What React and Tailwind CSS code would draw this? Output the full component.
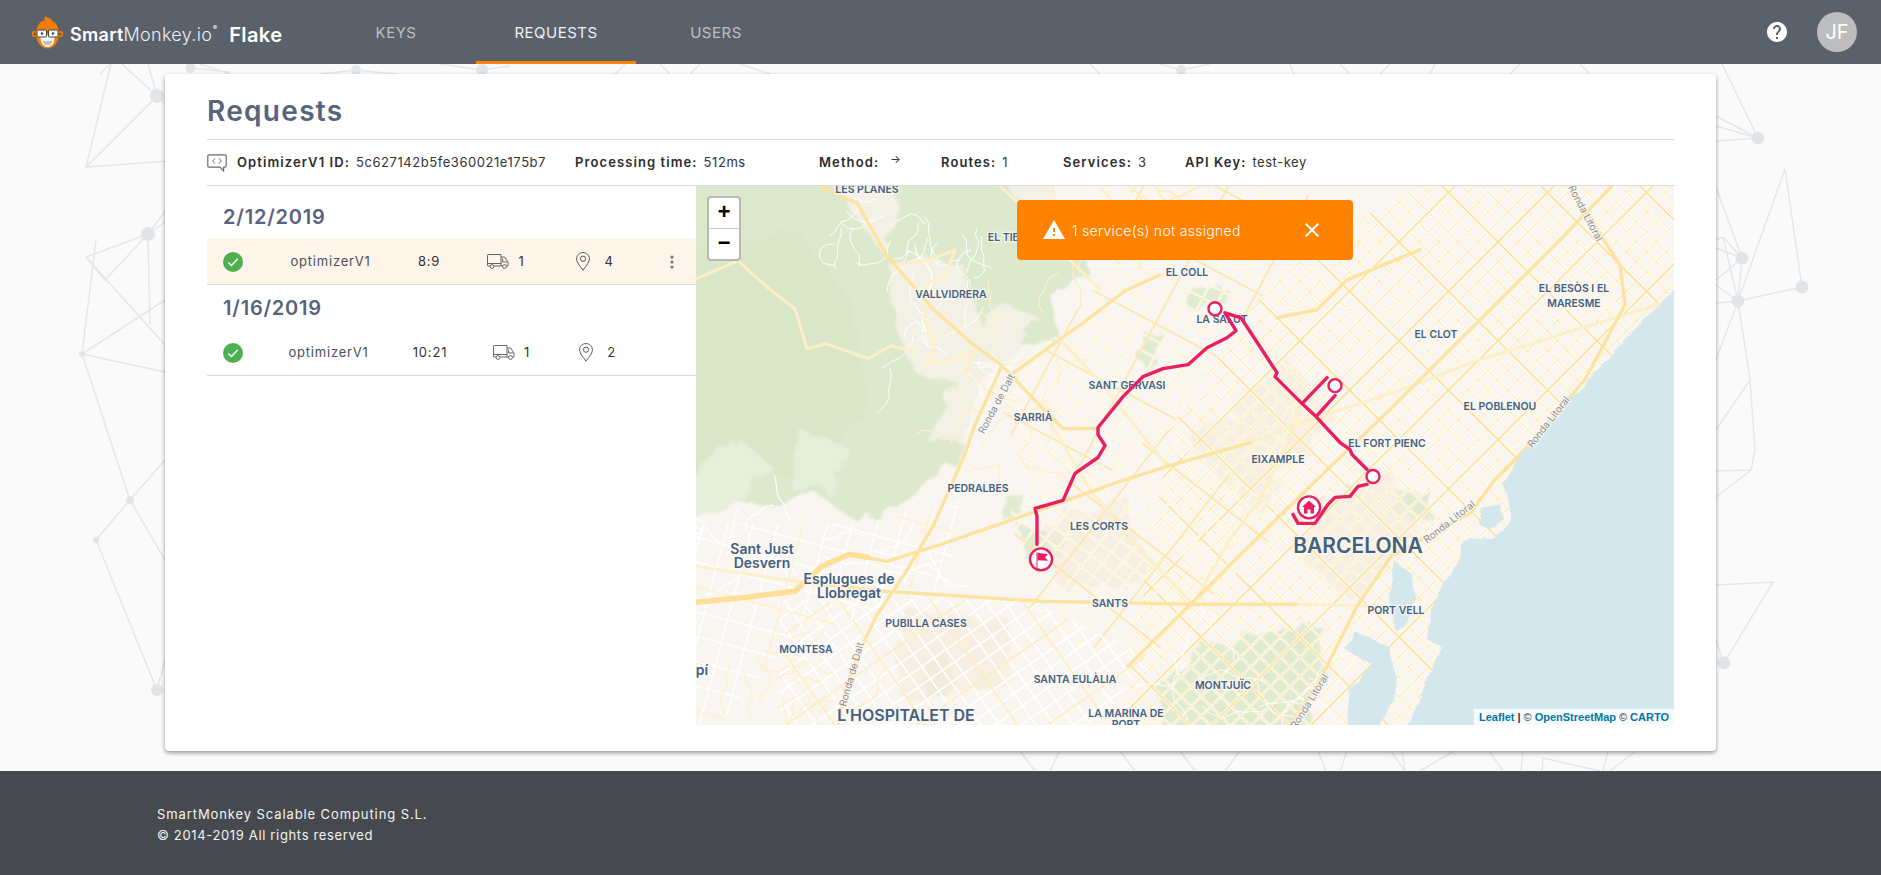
import { MdClose, MdHelp, MdWarning } from "react-icons/md";

// seeded so the streets stay put between renders
function rng(seed) {
  let s = seed;
  return () => {
    s = (s * 16807) % 2147483647;
    return s / 2147483647;
  };
}

function gridPaths(cx, cy, deg, step, n, len) {
  let minor = "";
  let major = "";
  const a = (deg * Math.PI) / 180;
  const dirs = [
    [Math.cos(a), Math.sin(a)],
    [-Math.sin(a), Math.cos(a)],
  ];
  dirs.forEach(([dx, dy], k) => {
    const [px, py] = dirs[1 - k];
    for (let i = -n; i <= n; i++) {
      const ox = cx + px * i * step;
      const oy = cy + py * i * step;
      const seg = `M${(ox - dx * len).toFixed(1)} ${(oy - dy * len).toFixed(1)}L${(ox + dx * len).toFixed(1)} ${(oy + dy * len).toFixed(1)}`;
      if (i % 5 === 0) major += seg;
      else minor += seg;
    }
  });
  return { minor, major };
}

function wiggles(seed, x, y, w, h, count, segs, stepLen) {
  const r = rng(seed);
  let d = "";
  for (let i = 0; i < count; i++) {
    let px = x + r() * w;
    let py = y + r() * h;
    let ang = r() * Math.PI * 2;
    d += `M${px.toFixed(1)} ${py.toFixed(1)}`;
    for (let j = 0; j < segs; j++) {
      ang += (r() - 0.5) * 1.5;
      px += Math.cos(ang) * stepLen;
      py += Math.sin(ang) * stepLen;
      d += `L${px.toFixed(1)} ${py.toFixed(1)}`;
    }
  }
  return d;
}

const eixample = gridPaths(1300, 440, 45, 14, 32, 520);
const upper = gridPaths(1120, 390, 28, 15, 16, 260);
const corts = gridPaths(1060, 570, 38, 15, 15, 240);
const hospitalet = gridPaths(880, 660, 55, 15, 16, 260);
const west = gridPaths(780, 610, 15, 24, 8, 180);

const labels = [
  { t: "LES PLANES", x: 867, y: 190, s: 10.5 },
  { t: "EL TIBIDABO", x: 1020, y: 238, s: 10.5 },
  { t: "VALLVIDRERA", x: 951, y: 295, s: 10.5 },
  { t: "EL COLL", x: 1187, y: 273, s: 10.5 },
  { t: "LA SALUT", x: 1222, y: 320, s: 10.5 },
  { t: "SANT GERVASI", x: 1127, y: 386, s: 10.5 },
  { t: "SARRIÀ", x: 1033, y: 418, s: 10.5 },
  { t: "EL FORT PIENC", x: 1387, y: 444, s: 10.5 },
  { t: "EIXAMPLE", x: 1278, y: 460, s: 10.5 },
  { t: "PEDRALBES", x: 978, y: 489, s: 10.5 },
  { t: "LES CORTS", x: 1099, y: 527, s: 10.5 },
  { t: "BARCELONA", x: 1358, y: 546, s: 21 },
  { t: "Sant Just", x: 762, y: 549, s: 14 },
  { t: "Desvern", x: 762, y: 563, s: 14 },
  { t: "Esplugues de", x: 849, y: 579, s: 14 },
  { t: "Llobregat", x: 849, y: 593, s: 14 },
  { t: "SANTS", x: 1110, y: 604, s: 10.5 },
  { t: "PUBILLA CASES", x: 926, y: 624, s: 10.5 },
  { t: "MONTESA", x: 806, y: 650, s: 10.5 },
  { t: "pí", x: 702, y: 670, s: 14 },
  { t: "SANTA EULÀLIA", x: 1075, y: 680, s: 10.5 },
  { t: "MONTJUÏC", x: 1223, y: 686, s: 10.5 },
  { t: "L'HOSPITALET DE", x: 906, y: 716, s: 16 },
  { t: "LA MARINA DE", x: 1126, y: 714, s: 10.5 },
  { t: "PORT", x: 1126, y: 726, s: 10.5 },
  { t: "PORT VELL", x: 1396, y: 611, s: 10.5 },
  { t: "EL BESÒS I EL", x: 1574, y: 289, s: 10.5 },
  { t: "MARESME", x: 1574, y: 304, s: 10.5 },
  { t: "EL CLOT", x: 1436, y: 335, s: 10.5 },
  { t: "EL POBLENOU", x: 1500, y: 407, s: 10.5 },
];

const roadLabels = [
  { x: 996, y: 404, r: -62, t: "Ronda de Dalt" },
  { x: 851, y: 675, r: -74, t: "Ronda de Dalt" },
  { x: 1449, y: 522, r: -38, t: "Ronda Litoral" },
  { x: 1309, y: 702, r: -58, t: "Ronda Litoral" },
  { x: 1548, y: 422, r: -52, t: "Ronda Litoral" },
  { x: 1586, y: 213, r: 62, t: "Ronda Litoral" },
];

const majorRoads = [
  "M818 186L857 203L887 256L933 309L971 343L1002 366L1040 406L1063 429L1098 429",
  "M1002 366L975 425L964 457L933 527L903 577L876 617L864 643L845 690L838 726",
  "M696 603L746 598L795 592L822 567L849 555L887 562L941 545L1033 513L1117 483L1167 467L1250 443",
  "M803 583L884 592L1040 602L1193 605L1296 605",
  "M1128 667L1283 513L1393 407L1500 300L1560 240L1612 186",
  "M1291 726L1322 677L1357 607L1391 557L1471 513L1495 480L1525 450L1585 380L1625 305L1620 265L1596 228L1570 186",
  "M1014 373L1079 326L1125 291L1160 275",
  "M1277 318L1317 310L1347 280L1420 250",
];

const paleRoads = [
  "M696 279L738 261L769 289L795 309L807 349L826 344L868 359L891 346L918 353",
  "M898 265L930 260L955 250L945 275L925 285L925 320L935 350L925 365L950 360L975 350L965 375",
  "M696 567L803 583",
  "M1250 443L1310 420L1393 393L1480 360L1560 335L1674 300",
  "M1193 605L1230 540L1260 500L1290 440L1300 400",
  "M1167 467L1130 420L1098 380L1060 340",
  "M1296 605L1400 607L1420 600",
  "M1040 406L1090 490L1130 540L1193 605",
  "M1000 186L1030 215L1060 250L1100 290",
];

const netLines = [
  "M111 64L86 167L157 96L122 64M157 96L148 64M86 167L170 161M157 96L170 108",
  "M148 234L86 257L105 280L148 234L150 325M86 257L165 345M148 234L170 205M148 234L170 218",
  "M82 354L165 300M82 354L165 372M82 354L130 500L165 460M130 500L165 560M96 540L130 500M96 540L157 690L165 660M96 240L82 354",
  "M1758 138L1722 64M1758 138L1716 116M1758 138L1716 126M1758 138L1716 141M1716 187L1742 258",
  "M1738 301L1785 169L1802 287L1738 301L1742 258L1723 237L1738 301M1723 237L1716 240M1742 258L1716 248M1742 258L1716 280M1738 301L1716 285M1738 301L1716 303",
  "M1738 301L1716 360M1738 301L1750 380L1716 430M1755 450L1750 380M1716 471L1751 470L1716 497M1755 450L1751 470",
  "M1716 585L1773 582L1724 663L1716 640",
  "M110 64L100 74M200 64L230 74M190 68L230 72M356 70L320 74M356 70L395 74M482 70L510 66M482 70L440 64M625 64L615 74M660 64L670 74M700 64L690 74M740 64L770 74",
  "M1181 70L1160 64M1181 70L1210 64M1100 74L1090 64M1290 64L1294 74M1340 64L1350 74M1390 64L1380 74M1435 64L1430 74M1520 64L1510 74M1580 64L1590 74",
  "M1318 751L1326 771M1347 751L1340 771M1391 751L1405 771M1402 751L1405 771M1454 751L1420 771M1489 751L1503 771M1523 751L1521 771M1542 771L1543 758L1600 771M1608 751L1603 771M1636 751L1610 771",
  "M1020 751L1035 771M1060 751L1050 771M1180 751L1195 771M1240 751L1225 771M1120 751L1135 771",
];

const netNodes = [
  [157, 96, 7], [148, 234, 7], [82, 354, 3], [96, 540, 3], [130, 500, 4], [157, 690, 6],
  [190, 68, 5], [356, 70, 5], [482, 70, 6], [1181, 70, 5],
  [1758, 138, 6.5], [1742, 258, 6.5], [1738, 301, 6.5], [1802, 287, 6.5], [1724, 663, 6.5],
];

function NetworkBackground() {
  return (
    <svg className="absolute inset-0 h-[875px] w-[1881px]" viewBox="0 0 1881 875" fill="none">
      {netLines.map((d, i) => (
        <path key={i} d={d} stroke="#e4e7ea" strokeWidth="1.5" />
      ))}
      {netNodes.map(([x, y, r], i) => (
        <circle key={i} cx={x} cy={y} r={r} fill="#e2e5e8" />
      ))}
    </svg>
  );
}

function MonkeyLogo() {
  return (
    <svg width="31" height="33" viewBox="0 0 31 33" className="shrink-0">
      <path d="M13 5C12 3 12 1 14 0C14 2 17 1 19 3C20 4 20 5 20 6Z" fill="#f57c00" />
      <circle cx="2.8" cy="18" r="2.3" fill="none" stroke="#f57c00" strokeWidth="1.6" />
      <circle cx="28.2" cy="18" r="2.3" fill="none" stroke="#f57c00" strokeWidth="1.6" />
      <path d="M15.5 4C23 4 27 10 27 18C27 26 22 32.5 15.5 32.5C9 32.5 4 26 4 18C4 10 8 4 15.5 4Z" fill="#f57c00" />
      <path d="M8 19H23L22 26C21 29 18 31 15.5 31C13 31 10 29 9 26Z" fill="#f4f4f4" />
      <rect x="5" y="14" width="9.5" height="7" rx="1" fill="#fff" stroke="#444" strokeWidth="1" />
      <rect x="16.5" y="14" width="9.5" height="7" rx="1" fill="#fff" stroke="#444" strokeWidth="1" />
      <path d="M14.5 16H16.5" stroke="#444" strokeWidth="1" />
      <circle cx="10" cy="17.5" r="1.3" fill="#444" />
      <circle cx="21" cy="17.5" r="1.3" fill="#444" />
      <path d="M11 26H20M12 28H19" stroke="#777" strokeWidth="0.8" />
    </svg>
  );
}

function CodeBubble() {
  return (
    <svg width="20" height="18" viewBox="0 0 20 18" fill="none" stroke="#6b6b6b" strokeWidth="1.2" className="shrink-0">
      <path d="M2 .8H18C18.7.8 19.2 1.3 19.2 2V12C19.2 12.7 18.7 13.2 18 13.2H16.6V17L13 13.2H2C1.3 13.2.8 12.7.8 12V2C.8 1.3 1.3.8 2 .8Z" />
      <path d="M8.2 4.5L5.6 7L8.2 9.5M11.8 4.5L14.4 7L11.8 9.5" strokeWidth="1" />
    </svg>
  );
}

function CheckDot() {
  return (
    <svg width="20" height="20" viewBox="0 0 20 20" className="shrink-0">
      <circle cx="10" cy="10" r="10" fill="#4caf50" />
      <path d="M5.3 10.4L8.5 13.5L14.8 6.8" fill="none" stroke="#fff" strokeWidth="1.4" />
    </svg>
  );
}

function Truck() {
  return (
    <svg width="22" height="15" viewBox="0 0 22 15" fill="none" stroke="#555" strokeWidth="0.9" className="shrink-0">
      <path d="M3 12H1.2C.8 12 .5 11.7.5 11.3V1.2C.5.8.8.5 1.2.5H14V12H7" />
      <path d="M14 3H17.5L21 8V12H19.5M15.5 12H14" />
      <path d="M15.6 4.5V8H20" />
      <circle cx="5" cy="12.5" r="1.9" />
      <circle cx="17.5" cy="12.5" r="1.9" />
      <path d="M.5 9.5H14" />
    </svg>
  );
}

function Pin() {
  return (
    <svg width="14" height="19" viewBox="0 0 14 19" fill="none" stroke="#555" strokeWidth="1" className="shrink-0">
      <path d="M7 18.2C5.5 15.6.6 11 .6 6.7C.6 3.2 3.5.6 7 .6C10.5.6 13.4 3.2 13.4 6.7C13.4 11 8.5 15.6 7 18.2Z" />
      <circle cx="7" cy="6.7" r="2.6" />
    </svg>
  );
}

function Kebab() {
  return (
    <svg width="4" height="14" viewBox="0 0 4 14" className="shrink-0">
      <circle cx="2" cy="2" r="1.6" fill="#757575" />
      <circle cx="2" cy="7" r="1.6" fill="#757575" />
      <circle cx="2" cy="12" r="1.6" fill="#757575" />
    </svg>
  );
}

function InfoItem({ label, value, className, valueClass = "" }) {
  return (
    <div className={`flex items-center gap-[6px] ${className}`}>
      <span className="font-semibold tracking-[1.1px] text-[#2c2c2c]">{label}</span>
      {value && <span className={`tracking-[0.55px] text-[#333] ${valueClass}`}>{value}</span>}
    </div>
  );
}

function RequestRow({ time, vehicles, stops, active, nameCell, timeCell, truckCell, pinCell }) {
  return (
    <div className={`flex h-[47px] items-center border-b border-[#d9dade] pt-[1px] text-[13px] tracking-[0.8px] text-[#333] ${active ? "bg-[#fdf4ea]" : ""}`}>
      <div className="flex w-[52px] justify-center">
        <CheckDot />
      </div>
      <div className={`text-center text-[#4a4f57] ${nameCell}`}>optimizerV1</div>
      <div className={`text-center ${timeCell}`}>{time}</div>
      <div className={`flex items-center justify-center gap-[9px] ${truckCell}`}>
        <Truck />
        <span>{vehicles}</span>
      </div>
      <div className={`flex items-center justify-center gap-[14px] ${pinCell}`}>
        <Pin />
        <span>{stops}</span>
      </div>
      {active && (
        <div className="flex flex-1 justify-end pr-[22px]">
          <Kebab />
        </div>
      )}
    </div>
  );
}

function BarcelonaMap() {
  return (
    <svg className="absolute inset-0 h-full w-full" viewBox="696 186 978 540" preserveAspectRatio="none">
      <defs>
        <filter id="rough" x="-5%" y="-5%" width="110%" height="110%">
          <feTurbulence type="fractalNoise" baseFrequency="0.035" numOctaves="3" seed="4" />
          <feDisplacementMap in="SourceGraphic" scale="26" />
          <feGaussianBlur stdDeviation="0.8" />
        </filter>
        <filter id="coast" x="-5%" y="-5%" width="110%" height="110%">
          <feTurbulence type="fractalNoise" baseFrequency="0.06" numOctaves="2" seed="9" />
          <feDisplacementMap in="SourceGraphic" scale="6" />
        </filter>
        <clipPath id="eixampleClip">
          <path d="M1170 430L1235 330L1300 250L1420 186H1674V330L1420 726H1120Z" />
        </clipPath>
        <clipPath id="upperClip">
          <path d="M1000 400L1060 330L1110 270L1100 186H1420L1300 250L1235 330L1170 430L1100 480L1030 500Z" />
        </clipPath>
        <clipPath id="cortsClip">
          <path d="M1010 510L1170 430L1290 520L1150 660L1030 640Z" />
        </clipPath>
        <clipPath id="hospClip">
          <path d="M780 600L1030 600L1150 660L1100 726H780Z" />
        </clipPath>
        <clipPath id="westClip">
          <path d="M696 525L860 525L960 500L950 590L790 640L720 726H696Z" />
        </clipPath>
      </defs>

      <rect x="696" y="186" width="978" height="540" fill="#f9f6f1" />

      {/* hills and parks */}
      <g filter="url(#rough)">
        <path d="M680 170H1040L1060 210L1085 240L1085 270L1050 300L1060 343L1020 345L985 385L968 420L950 470L925 495L885 510L860 525L820 495L770 505L730 505L680 525Z" fill="#dde9cd" />
        <path d="M680 250L800 230L850 300L870 400L820 470L720 480L680 500Z" fill="#d9e7c8" />
        <path d="M895 262L960 262L990 350L965 375L945 380L915 372L892 320ZM1000 300L1040 320L1020 345L985 385L960 440L925 440L945 395ZM830 170H885L900 230L880 250L855 215ZM1040 170H1000L1020 215L1060 250L1075 240Z" fill="#f3f1e6" />
        <path d="M680 470L740 440L775 470L740 505L680 525ZM800 430L850 450L830 490L790 490Z" fill="#e6efda" />
        <path d="M1187 287L1227 287L1227 306L1200 312L1185 305ZM1143 330L1160 330L1160 367L1143 367ZM1006 497L1025 497L1025 523L1006 523ZM1021 530L1063 530L1063 557L1021 557ZM1391 493L1433 493L1433 517L1391 517ZM925 655L950 655L950 700L925 700Z" fill="#e1ebd2" />
        <path d="M1150 740L1170 670L1200 645L1270 635L1322 625L1325 660L1300 740Z" fill="#dfeace" />
        <path d="M1190 440L1290 360L1340 420L1250 520ZM1320 500L1390 470L1420 540L1350 600L1300 560ZM1040 520L1130 500L1150 590L1060 590ZM900 610L1010 620L1010 690L900 700Z" fill="#f6ecdc" fillOpacity="0.7" />
      </g>

      {/* street grids */}
      <g fill="none" strokeLinecap="round">
        <g clipPath="url(#eixampleClip)">
          <path d={eixample.minor} stroke="#ffffff" strokeWidth="2.6" />
          <path d={eixample.minor} stroke="#fde9b2" strokeWidth="1.1" />
          <path d={eixample.major} stroke="#ffffff" strokeWidth="3.4" />
          <path d={eixample.major} stroke="#fde3a0" strokeWidth="2" />
        </g>
        <g clipPath="url(#upperClip)">
          <path d={upper.minor} stroke="#ffffff" strokeWidth="2.2" />
          <path d={upper.minor} stroke="#fdecc0" strokeWidth="1" />
          <path d={upper.major} stroke="#fde7ae" strokeWidth="1.8" />
        </g>
        <g clipPath="url(#cortsClip)">
          <path d={corts.minor} stroke="#ffffff" strokeWidth="2.2" />
          <path d={corts.minor} stroke="#fdecc0" strokeWidth="1" />
          <path d={corts.major} stroke="#fde7ae" strokeWidth="1.8" />
        </g>
        <g clipPath="url(#hospClip)">
          <path d={hospitalet.minor} stroke="#ffffff" strokeWidth="1.6" />
          <path d={hospitalet.major} stroke="#fdeec0" strokeWidth="1.6" />
        </g>
        <g clipPath="url(#westClip)">
          <path d={west.minor} stroke="#ffffff" strokeWidth="1.4" />
          <path d={west.major} stroke="#fdf1cd" strokeWidth="1.5" />
        </g>
        <path d={wiggles(7, 890, 240, 110, 140, 26, 7, 7)} stroke="#ffffff" strokeWidth="1" />
        <path d={wiggles(21, 830, 190, 60, 60, 10, 7, 6)} stroke="#ffffff" strokeWidth="1" />
        <path d={wiggles(33, 1170, 650, 150, 75, 12, 9, 8)} stroke="#ffffff" strokeWidth="1" />
        <path d={wiggles(47, 700, 520, 230, 80, 18, 6, 8)} stroke="#ffffff" strokeWidth="1.2" />
        <path d={wiggles(59, 960, 300, 110, 180, 24, 6, 8)} stroke="#fdf0cb" strokeWidth="1.3" />
        <path d={wiggles(71, 1060, 190, 120, 90, 22, 6, 9)} stroke="#fdecbd" strokeWidth="1.4" />
        <path d={wiggles(83, 700, 620, 160, 100, 18, 6, 9)} stroke="#fdf0cb" strokeWidth="1.3" />
        {paleRoads.map((d, i) => (
          <path key={i} d={d} stroke="#fdf0c8" strokeWidth="3" strokeLinejoin="round" />
        ))}
        {majorRoads.map((d, i) => (
          <path key={i} d={d} stroke="#fde3a2" strokeWidth="3.4" strokeLinejoin="round" />
        ))}
        <path d="M696 603L746 598L795 592L822 567L849 555L868 558" stroke="#fddf98" strokeWidth="5.5" strokeLinejoin="round" />
      </g>

      {/* sea and harbour */}
      <g filter="url(#coast)" fill="#d4e7ec">
        <path d="M1690 280L1674 290L1620 345L1584 385L1536 437L1525 450L1502 483L1510 505L1510 520L1495 540L1484 538L1464 543L1449 577L1431 610L1427 640L1441 647L1414 713L1404 740H1690Z" />
        <path d="M1395 562L1412 575L1416 600L1408 625L1396 632L1388 600ZM1355 632L1390 648L1397 690L1375 740H1345L1350 690L1372 665L1345 650Z" />
        <path d="M1482 508L1500 505L1503 518L1490 530L1480 526Z" />
      </g>

      {/* place names */}
      <g className="font-['Inter',sans-serif] font-semibold [paint-order:stroke]" fill="#44607f" stroke="#fbf9f5" strokeWidth="2.5" strokeOpacity="0.8" textAnchor="middle" dominantBaseline="central">
        {labels.map((l) => (
          <text key={`${l.t}${l.y}`} x={l.x} y={l.y} fontSize={l.s}>
            {l.t}
          </text>
        ))}
        {roadLabels.map((l, i) => (
          <text key={i} x={l.x} y={l.y} fontSize="10" fontWeight="400" fill="#8b8f92" transform={`rotate(${l.r} ${l.x} ${l.y})`}>
            {l.t}
          </text>
        ))}
      </g>

      {/* route */}
      <g fill="none" stroke="#e91e63" strokeWidth="3.4" strokeLinejoin="round" strokeLinecap="round">
        <path d="M1037 545L1037 517L1035 509L1063 501L1075 474L1098 458L1105 446L1098 435L1098 428L1123 397L1143 377L1163 369L1188 365L1207 348L1227 338L1236 331L1225 313L1241 318L1277 373L1275 377L1302 404L1327 378M1302 404L1316 417L1335 396M1316 417L1340 443L1350 450L1352 455L1367 470" />
        <path d="M1367 485L1358 487L1350 497L1335 498L1328 505L1315 524L1298 524L1293 515" />
      </g>
      <g fill="#fff" stroke="#e91e63" strokeWidth="2.4">
        <circle cx="1215" cy="309" r="6.5" />
        <circle cx="1335" cy="386" r="6.5" />
        <circle cx="1373" cy="477" r="6.5" />
        <circle cx="1309" cy="508" r="11" />
        <circle cx="1041" cy="560" r="11" />
      </g>
      <path d="M1309 501L1302 507.500H1304V514H1307.500V510H1310.500V514H1314V507.500H1316Z" fill="#e91e63" />
      <path d="M1037 553V569" stroke="#e91e63" strokeWidth="1" />
      <path d="M1037.500 553.500L1048 555L1045 558L1048 561.500L1037.500 561Z" fill="#e91e63" />
    </svg>
  );
}

function MapPanel() {
  return (
    <div className="relative flex-1 overflow-hidden bg-[#f9f6f1]">
      <BarcelonaMap />
      <div className="absolute left-[11px] top-[10px] flex w-[34px] flex-col overflow-hidden rounded-[4px] border-2 border-[#b8b8b4] bg-white font-['Liberation_Mono',monospace] text-[22px] font-bold text-black">
        <div className="flex h-[31px] items-center justify-center border-b border-[#ccc]">+</div>
        <div className="flex h-[30px] items-center justify-center">−</div>
      </div>
      <div className="absolute left-[321px] top-[14px] flex h-[60px] w-[336px] items-center rounded-[4px] bg-[#ff8300] pl-[25px] pr-[29px] text-[14px] font-light tracking-[0.3px] text-white">
        <MdWarning size={24} className="mr-[6px] shrink-0" />
        <span className="flex-1">1 service(s) not assigned</span>
        <MdClose size={24} className="shrink-0" />
      </div>
      <div className="absolute bottom-0 right-0 flex h-[16px] items-center bg-[#ffffffcc] px-[5px] font-['Liberation_Sans',sans-serif] text-[11px] font-bold text-[#333]">
        <span className="text-[#0078a8]">Leaflet</span>
        <span className="mx-[3px]">|</span>
        <span className="mr-[3px] font-normal">©</span>
        <span className="text-[#0078a8]">OpenStreetMap</span>
        <span className="mx-[3px] font-normal">©</span>
        <span className="text-[#0078a8]">CARTO</span>
      </div>
    </div>
  );
}

export default function App() {
  return (
    <div className="relative flex h-[875px] w-full flex-col overflow-hidden bg-[#fafafa] font-['Inter',sans-serif]">
      <NetworkBackground />

      <header className="relative flex h-16 shrink-0 items-center bg-[#5a616b]">
        <div className="flex w-[316px] items-center pl-[32px]">
          <MonkeyLogo />
          <span className="ml-[7px] mt-[5px] text-[18px] font-semibold tracking-[0.3px] text-white">Smart</span>
          <span className="mt-[5px] text-[18px] font-light tracking-[0.3px] text-[#eceef0]">Monkey.io</span>
          <span className="mb-[10px] ml-[1px] text-[6px] text-white">®</span>
          <span className="ml-[12px] mt-[5px] text-[20px] font-semibold tracking-[0.4px] text-white">Flake</span>
        </div>
        <nav className="flex h-full text-[15px] tracking-[0.5px]">
          <div className="flex w-40 items-center justify-center pt-[2px] text-white/60">KEYS</div>
          <div className="flex w-40 items-center justify-center border-b-[3px] border-[#ff8300] pt-[5px] text-white/90">REQUESTS</div>
          <div className="flex w-40 items-center justify-center pt-[2px] text-white/60">USERS</div>
        </nav>
        <div className="ml-auto flex items-center gap-[28px] pr-[24px]">
          <MdHelp size={24} className="text-white" />
          <div className="flex h-10 w-10 items-center justify-center rounded-full bg-[#bdbdbd] text-[20px] text-white">JF</div>
        </div>
      </header>

      <main className="relative mx-[165px] mt-[10px] flex h-[677px] flex-col rounded-[4px] bg-white px-[42px] pb-[26px] shadow-[0_2px_4px_rgba(0,0,0,0.4)]">
        <div className="flex h-[66px] shrink-0 items-center border-b border-[#d9dade] pt-[8px]">
          <h1 className="text-[28px] font-semibold tracking-[1.3px] text-[#58637d]">Requests</h1>
        </div>
        <div className="flex h-[46px] shrink-0 items-center border-b border-[#d9dade] text-[13px]">
          <div className="mr-[10px]">
            <CodeBubble />
          </div>
          <InfoItem label="OptimizerV1 ID:" value="5c627142b5fe360021e175b7" className="w-[338px]" />
          <InfoItem label="Processing time:" value="512ms" className="w-[244px]" />
          <InfoItem label="Method:" value="→" valueClass="ml-[5px] -translate-y-[3px] text-[11px]" className="w-[122px]" />
          <InfoItem label="Routes:" value="1" className="w-[122px]" />
          <InfoItem label="Services:" value="3" className="w-[122px]" />
          <InfoItem label="API Key:" value="test-key" />
        </div>
        <div className="flex min-h-0 flex-1">
          <div className="w-[489px] shrink-0">
            <div className="flex h-[52px] items-center pl-[16px] pt-[10px] text-[20px] font-semibold tracking-[0.8px] text-[#58637d]">2/12/2019</div>
            <RequestRow active time="8:9" vehicles="1" stops="4" nameCell="w-[143px]" timeCell="w-[54px]" truckCell="w-[100px]" pinCell="w-[78px]" />
            <div className="flex h-[44px] items-center pl-[16px] pt-[2px] text-[20px] font-semibold tracking-[0.8px] text-[#58637d]">1/16/2019</div>
            <RequestRow time="10:21" vehicles="1" stops="2" nameCell="w-[139px]" timeCell="w-[64px]" truckCell="w-[99px]" pinCell="w-[73px]" />
          </div>
          <MapPanel />
        </div>
      </main>

      <footer className="relative mt-auto flex h-[104px] shrink-0 flex-col justify-center bg-[#464a4e] pl-[157px] pt-[4px] text-[13px] leading-[21px] text-[#f3f3f3]">
        <div className="tracking-[0.9px]">SmartMonkey Scalable Computing S.L.</div>
        <div className="tracking-[0.65px]">© 2014-2019 All rights reserved</div>
      </footer>
    </div>
  );
}
